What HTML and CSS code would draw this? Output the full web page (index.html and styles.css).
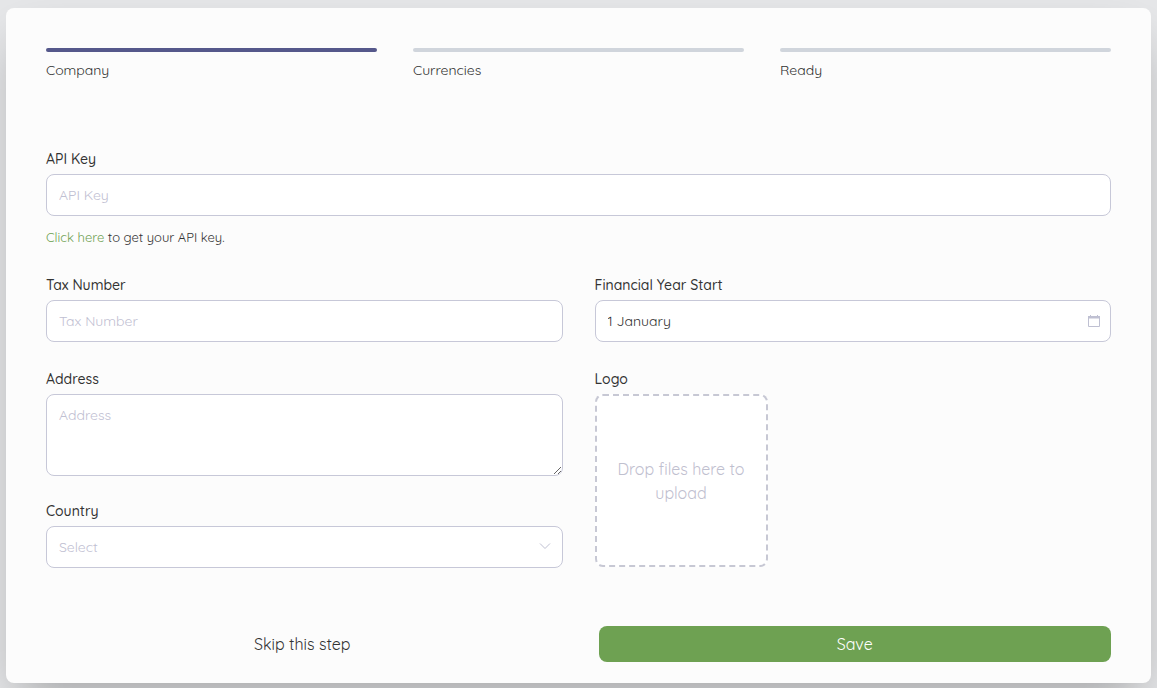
FILE: index.html
```
<!DOCTYPE html>
<html lang="en">
<head>
    <meta charset="UTF-8">
    <meta name="viewport" content="width=device-width, initial-scale=1.0">
    <title>Company</title>
    <link rel="stylesheet" href="styles.css">
</head>
<body>
    <main class="wizard">
        <ol class="steps">
            <li class="step active">Company</li>
            <li class="step">Currencies</li>
            <li class="step">Ready</li>
        </ol>

        <form class="company-form">
            <div class="fields">
                <div class="field full">
                    <label for="apiKey">API Key</label>
                    <input class="control" type="text" id="apiKey" placeholder="API Key">
                    <p class="hint"><a href="#">Click here</a> to get your API key.</p>
                </div>

                <div class="field">
                    <label for="taxNumber">Tax Number</label>
                    <input class="control" type="text" id="taxNumber" placeholder="Tax Number">
                </div>

                <div class="field">
                    <label for="financialYear">Financial Year Start</label>
                    <div class="with-icon">
                        <input class="control" type="text" id="financialYear" value="1 January">
                        <svg class="icon calendar" viewBox="0 0 14 14" aria-hidden="true">
                            <path d="M1.5 2.5h11v10h-11z" fill="none" stroke="currentColor"/>
                            <path d="M1 2h12v2.5H1zM3 1h1v2H3zM10 1h1v2h-1z" fill="currentColor"/>
                        </svg>
                    </div>
                </div>

                <div class="column">
                    <div class="field">
                        <label for="address">Address</label>
                        <textarea class="control" id="address" placeholder="Address"></textarea>
                    </div>
                    <div class="field">
                        <label for="country">Country</label>
                        <div class="with-icon">
                            <select class="control" id="country">
                                <option value="">Select</option>
                            </select>
                            <svg class="icon arrow" viewBox="0 0 12 12" aria-hidden="true">
                                <path d="M1 3.5l5 5 5-5" fill="none" stroke="currentColor"/>
                            </svg>
                        </div>
                    </div>
                </div>

                <div class="field">
                    <label for="logo">Logo</label>
                    <label class="dropzone" for="logo">Drop files here to upload</label>
                    <input class="file-input" type="file" id="logo">
                </div>
            </div>

            <div class="actions">
                <button type="button" class="btn">Skip this step</button>
                <button type="submit" class="btn btn-save">Save</button>
            </div>
        </form>
    </main>
</body>
</html>
```
FILE: styles.css
```
* {
    box-sizing: border-box;
}

body {
    margin: 0;
    padding: 8px 6px 5px;
    background-color: #e6e7e9;
    color: #333;
    font-family: Quicksand, Lato, sans-serif;
    font-size: 14px;
    line-height: 20px;
    overflow-x: hidden;
}

.wizard {
    padding: 40px 40px 21px;
    background-color: #fcfcfc;
    border-radius: 8px;
    box-shadow: 0 25px 50px -12px rgba(0, 0, 0, 0.3);
}

.steps {
    display: grid;
    grid-template-columns: repeat(3, 1fr);
    gap: 36px;
    margin: 0 0 69px;
    padding: 0;
    list-style: none;
}

.step::before {
    content: "";
    display: block;
    height: 4px;
    margin-bottom: 8px;
    border-radius: 2px;
    background-color: #d0d5dc;
}

.step.active::before {
    background-color: #55588b;
}

.fields {
    display: grid;
    grid-template-columns: 1fr 1fr;
    gap: 27px 32px;
}

.full {
    grid-column: 1 / -1;
}

.column {
    display: flex;
    flex-direction: column;
    gap: 25px;
}

.field {
    display: flex;
    flex-direction: column;
    gap: 5px;
}

.field label {
    font-weight: 500;
}

.control {
    width: 100%;
    height: 42px;
    padding: 10px 12px;
    border: 1px solid #c7c8d8;
    border-radius: 8px;
    background-color: #fff;
    color: #333;
    font: inherit;
    appearance: none;
}

.control::placeholder,
select.control,
.icon {
    color: #bfc0d2;
    opacity: 1;
}

textarea.control {
    display: block;
    height: 82px;
    resize: vertical;
}

.with-icon {
    position: relative;
}

.icon {
    position: absolute;
    pointer-events: none;
}

.calendar {
    top: 14px;
    right: 10px;
    width: 14px;
    height: 14px;
}

.arrow {
    top: 14px;
    right: 12px;
    width: 12px;
    height: 12px;
}

.hint {
    margin: 6px 0 1px;
    font-size: 13px;
    line-height: 20px;
}

.hint a {
    color: #6ea152;
    text-decoration: none;
}

.field .dropzone {
    display: flex;
    align-items: center;
    justify-content: center;
    width: 173px;
    height: 173px;
    padding: 16px;
    border: 2px dashed #c7c8d4;
    border-radius: 8px;
    background-color: #fff;
    color: #bfc0cf;
    font-size: 16px;
    font-weight: 400;
    line-height: 24px;
    text-align: center;
    cursor: pointer;
}

.file-input {
    position: absolute;
    width: 1px;
    height: 1px;
    opacity: 0;
}

.actions {
    display: grid;
    grid-template-columns: 1fr 1fr;
    gap: 40px;
    margin-top: 58px;
}

.btn {
    padding: 6px 24px;
    border: 0;
    border-radius: 8px;
    background: none;
    color: inherit;
    font: inherit;
    font-size: 16px;
    line-height: 24px;
    cursor: pointer;
}

.btn-save {
    background-color: #6ea152;
    color: #fff;
}
```
